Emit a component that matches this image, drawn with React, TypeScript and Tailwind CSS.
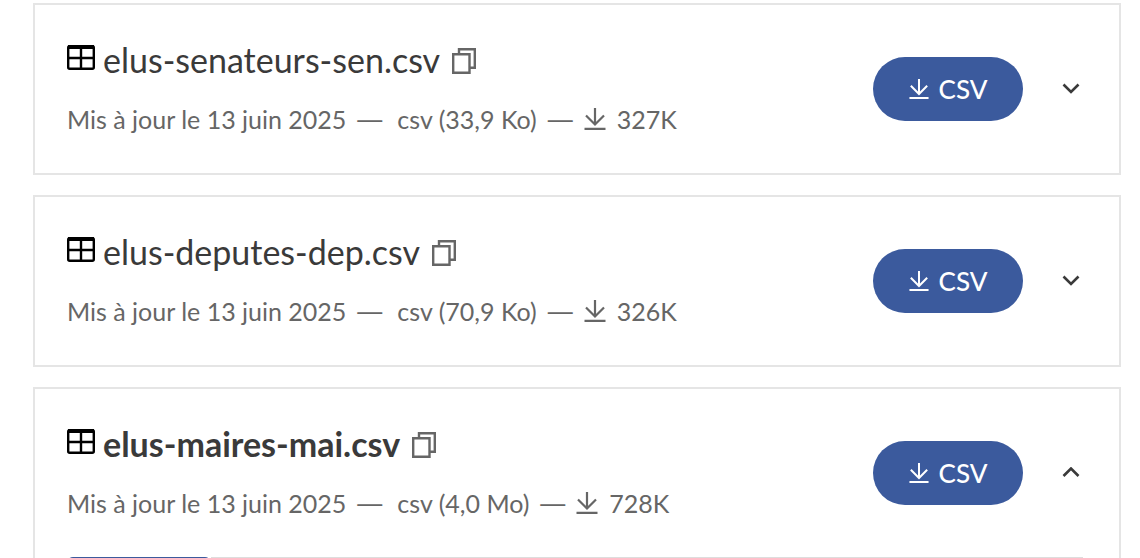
type Resource = {
  name: string;
  format: string;
  size: string;
  downloads: string;
  open: boolean;
};

const resources: Resource[] = [
  { name: "elus-senateurs-sen.csv", format: "csv", size: "33,9 Ko", downloads: "327K", open: false },
  { name: "elus-deputes-dep.csv", format: "csv", size: "70,9 Ko", downloads: "326K", open: false },
  { name: "elus-maires-mai.csv", format: "csv", size: "4,0 Mo", downloads: "728K", open: true },
];

function TableIcon() {
  return (
    <svg viewBox="0 0 28 25" className="h-[25px] w-7 shrink-0 text-black" fill="none" stroke="currentColor" strokeWidth="2.4" aria-hidden="true">
      <rect x="1.2" y="1.2" width="25.6" height="22.6" rx="1.5" />
      <path d="M1 2h26" strokeWidth="4" />
      <path d="M1 13h26M14 2v22" />
    </svg>
  );
}

function CopyIcon() {
  return (
    <svg viewBox="0 0 24 26" className="h-[26px] w-6" fill="none" stroke="currentColor" strokeWidth="2.4" aria-hidden="true">
      <path d="M1.200 6.200h16.300v18.600H1.200z" />
      <path d="M7 6V1.200h15.800v18.600h-5" />
    </svg>
  );
}

function DownloadIcon({ className }: { className: string }) {
  return (
    <svg viewBox="0 0 22 22" className={className} fill="none" stroke="currentColor" strokeWidth="2.2" aria-hidden="true">
      <path d="M11 0v16M2 7.500l9 9 9-9M0.500 20.800h21" />
    </svg>
  );
}

function Chevron({ up }: { up: boolean }) {
  return (
    <svg viewBox="0 0 18 12" className="h-3 w-[18px]" fill="none" stroke="currentColor" strokeWidth="2.6" aria-hidden="true">
      <path d={up ? "M1.500 9L9 1.500 16.500 9" : "M1.500 1.500L9 9 16.500 1.500"} />
    </svg>
  );
}

function Dash() {
  return <span className="font-['Liberation_Sans',sans-serif]">—</span>;
}

function ResourceCard({ resource }: { resource: Resource }) {
  return (
    <article className="border-2 border-[#e5e5e5] bg-white">
      <header className="flex items-center justify-between py-[34px] pr-6 pl-8">
        <div className="min-w-0">
          <div className="flex h-10 items-center">
            <div className="pb-1">
              <TableIcon />
            </div>
            <h3 className={`ml-2 pt-0.5 text-[34px] leading-10 text-[#3a3a3a] ${resource.open ? "font-bold" : "font-normal"}`}>
              {resource.name}
            </h3>
            <button type="button" aria-label="Copier le lien" className="ml-3 pt-1 text-[#666666]">
              <CopyIcon />
            </button>
          </div>
          <p className="mt-5 flex h-10 items-center gap-[11px] text-[25px] leading-10 text-[#666666]">
            <span>Mis à jour le 13 juin 2025</span>
            <Dash />
            <span className="ml-1">
              {resource.format} ({resource.size})
            </span>
            <Dash />
            <DownloadIcon className="h-[22px] w-[22px]" />
            <span>{resource.downloads}</span>
          </p>
        </div>
        <div className="flex items-center">
          <a href="#" className="flex h-16 w-[150px] items-center justify-center gap-2.5 rounded-full bg-[#3b5a9d] text-[26px] font-medium text-white">
            <DownloadIcon className="h-5 w-5" />
            CSV
          </a>
          <button
            type="button"
            aria-expanded={resource.open}
            aria-label={resource.open ? "Réduire" : "Développer"}
            className="ml-6 flex h-12 w-12 items-center justify-center text-[#3a3a3a]"
          >
            <Chevron up={resource.open} />
          </button>
        </div>
      </header>
      {resource.open && (
        <div className="mr-9 ml-8 flex h-16">
          <div className="w-36 rounded-t-md border-t-2 border-[#3b5a9d]" />
          <div className="grow border-t border-[#dddddd]" />
        </div>
      )}
    </article>
  );
}

export default function App() {
  return (
    <main className="flex h-screen flex-col gap-5 overflow-hidden bg-white pt-[3px] pr-[19px] pl-[33px] font-['Lato',sans-serif] *:shrink-0">
      {resources.map((resource) => (
        <ResourceCard key={resource.name} resource={resource} />
      ))}
    </main>
  );
}
